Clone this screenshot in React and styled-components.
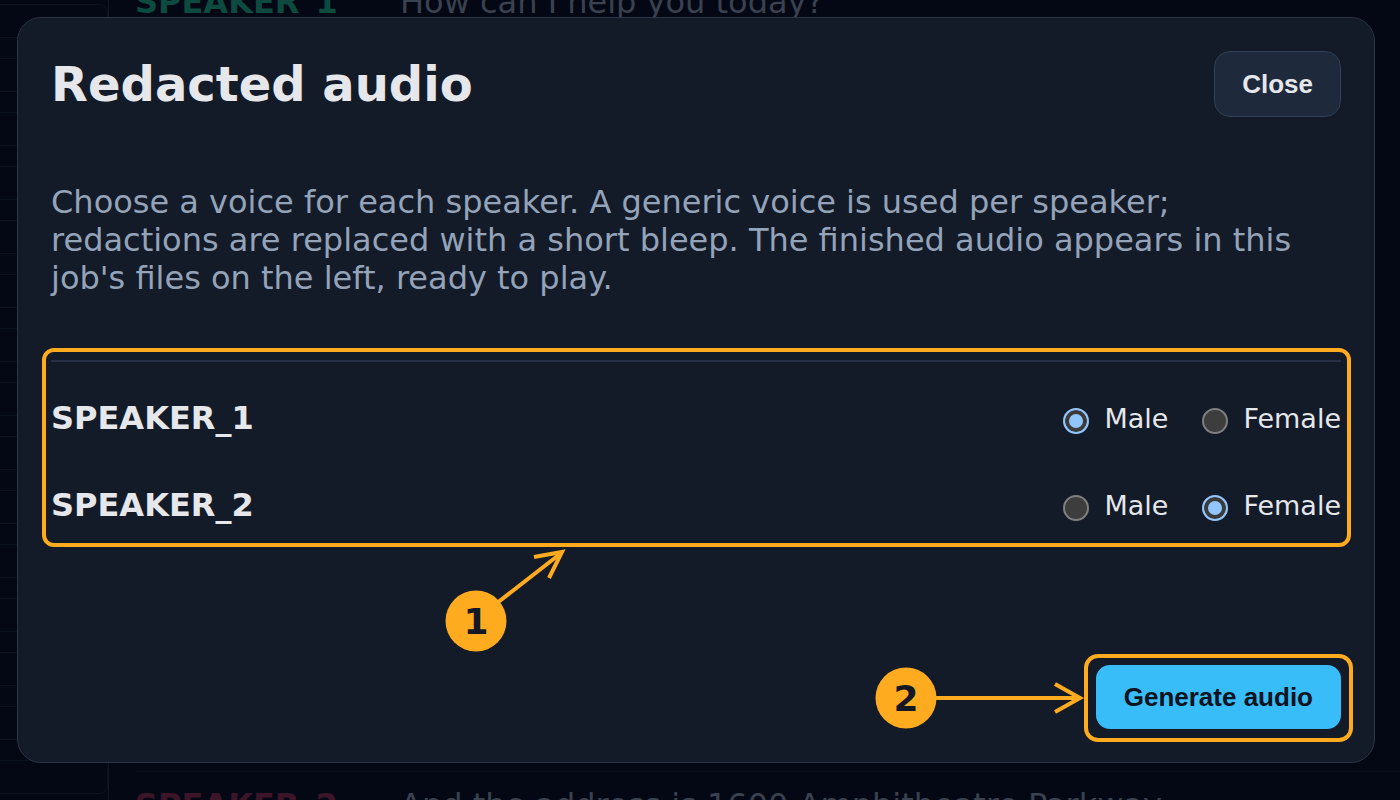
import React from "react";
import styled, { createGlobalStyle } from "styled-components";

const GlobalStyle = createGlobalStyle`
  html, body {
    margin: 0;
    padding: 0;
    background: #040814;
    overflow: hidden;
  }
  body {
    font-family: "DejaVu Sans", "Liberation Sans", sans-serif;
  }
`;

const ORANGE = "#ffab1f";

// page behind the dialog
const Page = styled.div`
  display: flex;
  width: 1400px;
  height: 800px;
  overflow: hidden;
`;

const Sidebar = styled.div`
  width: 108px;
  flex-shrink: 0;
  border-right: 1px solid #0e1523;
  display: flex;
  flex-direction: column;
  gap: 20px;
  padding-top: 4px;
`;

const FileCard = styled.div`
  height: 32px;
  margin-left: -12px;
  border: 1px solid #0c1320;
  border-radius: 8px;
`;

const Transcript = styled.div`
  flex: 1;
  margin-top: -32px;
  padding-left: 26px;
`;

const Line = styled.div`
  display: flex;
  border-top: 1px solid #0a101b;
  padding: 14px 0 20px;
  font-size: 32px;
  line-height: 38px;
`;

// rows of the transcript that sit fully under the dialog
const Covered = styled.div`
  height: 730px;
`;

const Who = styled.span`
  width: 265px;
  font-weight: bold;
  color: ${(p) => p.$color};
`;

const Said = styled.span`
  color: #3a414f;
`;

// dialog
const Backdrop = styled.div`
  position: fixed;
  inset: 0;
  display: flex;
  padding: 17px 25px 37px 17px;
`;

const Dialog = styled.div`
  flex: 1;
  display: flex;
  flex-direction: column;
  background: #131a28;
  border: 1px solid #2b3547;
  border-radius: 24px;
  padding: 33px;
`;

const Header = styled.div`
  display: flex;
  align-items: center;
  justify-content: space-between;
`;

const Title = styled.h2`
  margin: 0;
  font-size: 48px;
  line-height: 58px;
  font-weight: bold;
  color: #e5e7eb;
`;

const Button = styled.button`
  height: ${(p) => (p.$primary ? 64 : 66)}px;
  padding: 0 ${(p) => (p.$primary ? 28 : 27)}px;
  border-radius: ${(p) => (p.$primary ? 14 : 16)}px;
  border: ${(p) => (p.$primary ? "none" : "1px solid #334155")};
  background: ${(p) => (p.$primary ? "#38bdf8" : "#1e293b")};
  color: ${(p) => (p.$primary ? "#0b1220" : "#e5e7eb")};
  font-family: "Liberation Sans", Arial, sans-serif;
  font-weight: bold;
  font-size: 26px;
  cursor: pointer;
`;

const Intro = styled.p`
  margin: 66px 0 0;
  font-size: 32px;
  line-height: 38px;
  color: #94a3b8;
`;

// orange call-out frame drawn over whatever it wraps
const Highlight = styled.div`
  position: relative;
  margin-top: ${(p) => p.$top || 0}px;
  &::after {
    content: "";
    position: absolute;
    inset: ${(p) => p.$inset};
    border: 4px solid ${ORANGE};
    border-radius: ${(p) => p.$radius}px;
    pointer-events: none;
  }
`;

const Speakers = styled.div`
  border-top: 2px solid #273042;
  padding-top: 26px;
  display: flex;
  flex-direction: column;
  gap: 27px;
`;

const SpeakerRow = styled.div`
  height: 60px;
  display: flex;
  align-items: center;
  justify-content: space-between;
`;

const SpeakerName = styled.span`
  font-size: 32px;
  font-weight: bold;
  color: #e5e7eb;
  line-height: 38px;
`;

const Choices = styled.div`
  display: flex;
  align-items: center;
  gap: 34px;
`;

const Choice = styled.label`
  display: flex;
  align-items: center;
  gap: 15px;
  font-size: 27px;
  color: #e5e7eb;
  cursor: pointer;
`;

const Radio = styled.span`
  box-sizing: border-box;
  width: 26px;
  height: 26px;
  margin-top: 5px;
  border-radius: 50%;
  border: 2px solid ${(p) => (p.$checked ? "#93c5fd" : "#7f7f7f")};
  background: ${(p) => (p.$checked ? "#93c5fd" : "#3d3d3d")};
  box-shadow: ${(p) => (p.$checked ? "inset 0 0 0 4px #3a3a3a" : "none")};
`;

const Footer = styled.div`
  margin-top: auto;
  display: flex;
  justify-content: flex-end;
`;

const Annotations = styled.svg`
  position: fixed;
  left: 0;
  top: 0;
  pointer-events: none;
`;

const speakers = [
  { name: "SPEAKER_1", voice: "Male" },
  { name: "SPEAKER_2", voice: "Female" },
];

export default function App() {
  return (
    <>
      <GlobalStyle />
      <Page>
        <Sidebar>
          {Array.from({ length: 15 }).map((_, i) => (
            <FileCard key={i} />
          ))}
        </Sidebar>
        <Transcript>
          <Line>
            <Who $color="#0d4a40">SPEAKER_1</Who>
            <Said>How can I help you today?</Said>
          </Line>
          <Covered />
          <Line>
            <Who $color="#3d1529">SPEAKER_2</Who>
            <Said>And the address is 1600 Amphitheatre Parkway.</Said>
          </Line>
        </Transcript>
      </Page>

      <Backdrop>
        <Dialog>
          <Header>
            <Title>Redacted audio</Title>
            <Button>Close</Button>
          </Header>
          <Intro>
            Choose a voice for each speaker. A generic voice is used per
            speaker; redactions are replaced with a short bleep. The finished
            audio appears in this job's files on the left, ready to play.
          </Intro>
          <Highlight $top={63} $inset="-12px -10px -12px -9px" $radius={12}>
            <Speakers>
              {speakers.map((s) => (
                <SpeakerRow key={s.name}>
                  <SpeakerName>{s.name}</SpeakerName>
                  <Choices>
                    {["Male", "Female"].map((v) => (
                      <Choice key={v}>
                        <Radio $checked={s.voice === v} />
                        {v}
                      </Choice>
                    ))}
                  </Choices>
                </SpeakerRow>
              ))}
            </Speakers>
          </Highlight>
          <Footer>
            <Highlight $inset="-11px -12px -13px -12px" $radius={14}>
              <Button $primary>Generate audio</Button>
            </Highlight>
          </Footer>
        </Dialog>
      </Backdrop>

      <Annotations width="1400" height="800" viewBox="0 0 1400 800">
        <g stroke={ORANGE} strokeWidth="4" fill="none">
          <line x1="497" y1="603" x2="560" y2="554" />
          <polyline points="534,557 562,552 549,578" />
          <line x1="934" y1="698" x2="1078" y2="698" />
          <polyline points="1055,684 1080,698 1055,712" />
        </g>
        <g fill={ORANGE}>
          <circle cx="476" cy="621" r="30.5" />
          <circle cx="906" cy="698" r="30.5" />
        </g>
        <g
          fill="#141824"
          fontFamily="DejaVu Sans, sans-serif"
          fontWeight="bold"
          fontSize="36"
          textAnchor="middle"
        >
          <text x="476" y="634">1</text>
          <text x="906" y="711">2</text>
        </g>
      </Annotations>
    </>
  );
}
